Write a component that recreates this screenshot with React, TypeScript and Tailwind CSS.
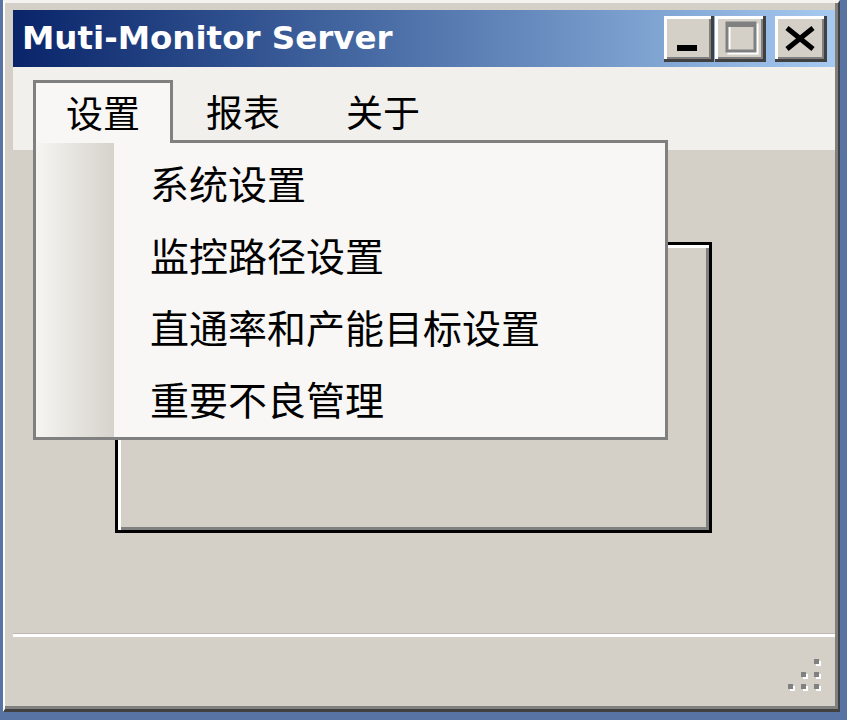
import React from "react";

const cjk = { fontFamily: '"Noto Sans CJK SC", "Noto Sans", sans-serif' };

const TitleButton = ({ children, className = "" }: { children: React.ReactNode; className?: string }) => (
  <div
    className={`h-[46px] bg-[#d4d0c8] flex items-center justify-center shadow-[inset_-3px_-3px_0_#404040,inset_3px_3px_0_#ffffff,inset_-5px_-5px_0_#808080] ${className}`}
  >
    {children}
  </div>
);

const menuItems = ["系统设置", "监控路径设置", "直通率和产能目标设置", "重要不良管理"];

export default function App() {
  return (
    <div className="relative w-[847px] h-[720px] bg-[#5874a4] overflow-hidden">
      {/* window */}
      <div className="ml-[3px] w-[837px] h-[712px] flex flex-col bg-[#d4d0c8] border-l-2 border-t-[3px] border-r-2 border-b-[3px] border-l-white border-t-[#f4f3f0] border-r-[#404040] border-b-[#404040] pl-[8px] pr-[3px] pt-[7px] shadow-[inset_-3px_-3px_0_#808080]">
        {/* title bar */}
        <div className="h-[57px] shrink-0 flex items-start justify-between bg-gradient-to-r from-[#0a246a] to-[#a6caf0]">
          <span
            className="pl-[9px] text-white font-bold text-[32.5px] leading-[57px]"
            style={{ fontFamily: '"DejaVu Sans", "Liberation Sans", sans-serif' }}
          >
            Muti-Monitor Server
          </span>
          <div className="flex items-start pt-[6px] pr-[8px]">
            <TitleButton className="w-[50px]">
              <svg width="50" height="46" viewBox="0 0 50 46">
                <rect x="13" y="29" width="20" height="6" fill="#000" />
              </svg>
            </TitleButton>
            <TitleButton className="w-[51px] ml-[1px]">
              <svg width="51" height="46" viewBox="0 0 51 46">
                <rect x="14" y="9" width="28" height="28" fill="none" stroke="#ffffff" strokeWidth="3" />
                <rect x="12" y="7" width="28" height="28" fill="none" stroke="#808080" strokeWidth="3" />
                <rect x="12" y="7" width="28" height="4" fill="#808080" />
              </svg>
            </TitleButton>
            <TitleButton className="w-[52px] ml-[9px]">
              <svg width="52" height="46" viewBox="0 0 52 46">
                <path d="M12 12 L38 33 M38 12 L12 33" stroke="#000" strokeWidth="5" />
              </svg>
            </TitleButton>
          </div>
        </div>

        {/* menu bar */}
        <div className="h-[83px] shrink-0 bg-[#f1f0ec] flex items-start pl-[20px] pt-[13px]" style={cjk}>
          <div className="relative z-20 w-[140px] h-[63px] flex items-center justify-center bg-[#f8f7f5] border-t-[3px] border-l-[3px] border-r-[3px] border-[#808080] text-[37px] text-black">
            设置
          </div>
          <div className="w-[140px] h-[63px] flex items-center justify-center text-[37px] text-black">报表</div>
          <div className="w-[140px] h-[63px] flex items-center justify-center text-[37px] text-black">关于</div>
        </div>

        {/* client area */}
        <div className="h-[483px] shrink-0 pl-[102px] pt-[92px]">
          <div className="w-[597px] h-[291px] border-[3px] border-black bg-[#d4d0c8] shadow-[inset_3px_3px_0_#ffffff,inset_-3px_-3px_0_#808080]" />
        </div>

        {/* status bar */}
        <div className="h-[4px] shrink-0 border-t border-[#bdb9b1] bg-white" />
        <div className="h-[70px] shrink-0 flex justify-end items-end pr-[8px] pb-[8px]">
          <svg width="40" height="40" viewBox="0 0 40 40">
            {[
              [27, 0],
              [14, 13],
              [27, 13],
              [1, 25],
              [14, 25],
              [27, 25],
            ].map(([x, y]) => (
              <g key={`${x}-${y}`}>
                <rect x={x + 2} y={y + 2} width="5" height="5" fill="#ffffff" />
                <rect x={x} y={y} width="5" height="5" fill="#808080" />
              </g>
            ))}
          </svg>
        </div>
      </div>

      {/* dropdown menu */}
      <div
        className="absolute z-10 left-[33px] top-[140px] w-[635px] h-[300px] bg-[#f8f7f5] border-[3px] border-[#808080] flex"
        style={cjk}
      >
        <div className="w-[78px] h-full bg-gradient-to-r from-[#f6f5f2] to-[#d6d3cc]" />
        <div className="flex flex-col pt-[3px] pl-[36px]">
          {menuItems.map((item) => (
            <div key={item} className="h-[72px] flex items-center text-[39px] text-black whitespace-nowrap">
              {item}
            </div>
          ))}
        </div>
      </div>
    </div>
  );
}
